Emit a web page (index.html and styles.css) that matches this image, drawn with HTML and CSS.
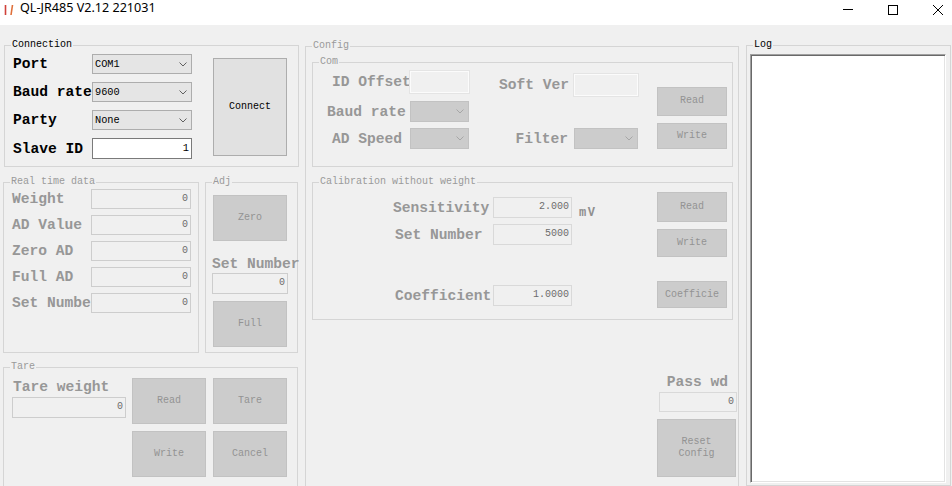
FILE: index.html
```html
<!DOCTYPE html>
<html lang="en">
<head>
    <meta charset="UTF-8">
    <meta name="viewport" content="width=device-width, initial-scale=1.0">
    <title>QL-JR485 V2.12 221031</title>
    <link rel="stylesheet" href="styles.css">
</head>
<body>
    <div class="titlebar">
        <svg class="app-icon" viewBox="0 0 14 14">
            <line x1="3.5" y1="2" x2="3.5" y2="12" stroke="#d0413a" stroke-width="1.6"/>
            <line x1="10.5" y1="2" x2="9" y2="12" stroke="#e0703a" stroke-width="1.6"/>
        </svg>
        <span class="title">QL-JR485 V2.12 221031</span>
        <div class="win-controls">
            <svg viewBox="0 0 10 10"><line x1="0" y1="4.5" x2="10" y2="4.5" stroke="#000"/></svg>
            <svg viewBox="0 0 10 10"><rect x="0.5" y="0.5" width="9" height="9" fill="none" stroke="#000"/></svg>
            <svg viewBox="0 0 10 10"><path d="M0 0 L10 10 M10 0 L0 10" stroke="#000" stroke-width="1"/></svg>
        </div>
    </div>

    <div class="client">
        <div class="col-left">
            <div class="group conn">
                <span class="group-title">Connection</span>
                <div class="conn-grid">
                    <div class="lbl big">Port</div>
                    <div class="combo">COM1<svg viewBox="0 0 8 5"><polyline points="0.5,0.5 4,4 7.5,0.5" fill="none" stroke="#606060"/></svg></div>
                    <div class="lbl big">Baud rate</div>
                    <div class="combo">9600<svg viewBox="0 0 8 5"><polyline points="0.5,0.5 4,4 7.5,0.5" fill="none" stroke="#606060"/></svg></div>
                    <div class="lbl big">Party</div>
                    <div class="combo">None<svg viewBox="0 0 8 5"><polyline points="0.5,0.5 4,4 7.5,0.5" fill="none" stroke="#606060"/></svg></div>
                    <div class="lbl big">Slave ID</div>
                    <div class="tb on">1</div>
                    <button class="btn on connect">Connect</button>
                </div>
            </div>

            <div class="mid-row">
                <div class="group off rt">
                    <span class="group-title">Real time data</span>
                    <div class="rt-grid">
                        <div class="lbl big">Weight</div>
                        <div class="tb">0</div>
                        <div class="lbl big">AD Value</div>
                        <div class="tb">0</div>
                        <div class="lbl big">Zero AD</div>
                        <div class="tb">0</div>
                        <div class="lbl big">Full AD</div>
                        <div class="tb">0</div>
                        <div class="lbl big">Set Numbe</div>
                        <div class="tb">0</div>
                    </div>
                </div>
                <div class="group off adj">
                    <span class="group-title">Adj</span>
                    <div class="adj-body">
                        <button class="btn">Zero</button>
                        <div class="adj-lbl big">Set Number</div>
                        <div class="tb">0</div>
                        <button class="btn full">Full</button>
                    </div>
                </div>
            </div>

            <div class="group off tare">
                <span class="group-title">Tare</span>
                <div class="tare-grid">
                    <div class="tare-field">
                        <div class="tare-lbl big">Tare weight</div>
                        <div class="tb">0</div>
                    </div>
                    <button class="btn">Read</button>
                    <button class="btn right">Tare</button>
                    <div></div>
                    <button class="btn">Write</button>
                    <button class="btn right">Cancel</button>
                </div>
            </div>
        </div>

        <div class="group off config">
            <span class="group-title">Config</span>
            <div class="group com">
                <span class="group-title">Com</span>
                <div class="com-grid">
                    <div class="lbl big a-idl">ID Offset</div>
                    <div class="tb pale a-idt"></div>
                    <div class="lbl big a-svl">Soft Ver</div>
                    <div class="tb pale a-svt"></div>
                    <div class="lbl big a-bdl">Baud rate</div>
                    <div class="combo off a-bdc"><svg viewBox="0 0 8 5"><polyline points="0.5,0.5 4,4 7.5,0.5" fill="none" stroke="#a6a6a6"/></svg></div>
                    <div class="lbl big a-adl">AD Speed</div>
                    <div class="combo off a-adc"><svg viewBox="0 0 8 5"><polyline points="0.5,0.5 4,4 7.5,0.5" fill="none" stroke="#a6a6a6"/></svg></div>
                    <div class="lbl big a-fl">Filter</div>
                    <div class="combo off a-fc"><svg viewBox="0 0 8 5"><polyline points="0.5,0.5 4,4 7.5,0.5" fill="none" stroke="#a6a6a6"/></svg></div>
                    <div class="com-btns">
                        <button class="btn b-read">Read</button>
                        <button class="btn b-write">Write</button>
                    </div>
                </div>
            </div>

            <div class="group cal">
                <span class="group-title">Calibration without weight</span>
                <div class="cal-form">
                    <div class="cal-row">
                        <div class="cal-lbl big">Sensitivity</div>
                        <div class="tb soft">2.000</div>
                        <div class="unit">mV</div>
                    </div>
                    <div class="cal-row">
                        <div class="cal-lbl big ind">Set Number</div>
                        <div class="tb soft">5000</div>
                    </div>
                    <div class="cal-row last">
                        <div class="cal-lbl big ind">Coefficient</div>
                        <div class="tb soft">1.0000</div>
                    </div>
                </div>
                <div class="cal-btns">
                    <button class="btn b-read">Read</button>
                    <button class="btn b-write">Write</button>
                    <button class="btn b-coef">Coefficie</button>
                </div>
            </div>

            <div class="pass">
                <div class="pass-lbl big">Pass wd</div>
                <div class="tb soft">0</div>
                <button class="btn reset">Reset<br>Config</button>
            </div>
        </div>

        <div class="group log">
            <span class="group-title">Log</span>
            <div class="log-box"></div>
        </div>
    </div>
</body>
</html>
```

FILE: styles.css
```css
* {
    box-sizing: border-box;
}
body {
    margin: 0;
    width: 952px;
    height: 486px;
    overflow: hidden;
    background: #f0f0f0;
    font-family: "Liberation Mono", monospace;
    color: #000;
}

/* title bar */
.titlebar {
    height: 25px;
    background: #fff;
    display: flex;
    align-items: flex-start;
}
.app-icon {
    width: 14px;
    height: 14px;
    margin: 3px 0 0 2px;
}
.title {
    margin-left: 4px;
    font-family: "Noto Sans", sans-serif;
    font-size: 12.6px;
    line-height: 16px;
}
.win-controls {
    margin-left: auto;
    display: flex;
    gap: 35px;
    padding: 5px 9px 0 0;
}
.win-controls svg {
    display: block;
    width: 10px;
    height: 10px;
}

/* layout */
.client {
    display: flex;
    align-items: flex-start;
}
.col-left {
    flex: none;
    width: 296px;
    margin-left: 3px;
    display: flex;
    flex-direction: column;
}
.group {
    position: relative;
    flex: none;
    border: 1px solid #d5d5d5;
}
.group-title {
    position: absolute;
    top: -7px;
    left: 6px;
    padding: 0 1px;
    background: #f0f0f0;
    font-size: 10px;
    line-height: 12px;
    white-space: nowrap;
}
.group.off .group-title {
    color: #9a9a9a;
}

/* controls */
.big {
    font-size: 14.6px;
    font-weight: bold;
    white-space: nowrap;
}
.off .big {
    color: #979797;
}
.lbl {
    display: flex;
    align-items: center;
}
.combo {
    display: flex;
    align-items: center;
    height: 20px;
    padding-left: 2px;
    border: 1px solid #adadad;
    background: #e5e5e5;
    font-size: 10.3px;
}
.combo svg {
    width: 8px;
    height: 5px;
    margin-left: auto;
    margin-right: 4px;
}
.combo.off {
    height: 21px;
    background: #cccccc;
    border-color: #c2c2c2;
}
.tb {
    height: 21px;
    padding-right: 2px;
    border: 1px solid #cdcdcd;
    background: #f0f0f0;
    color: #6d6d6d;
    font-size: 10px;
    line-height: 18px;
    text-align: right;
}
.tb.on {
    background: #fff;
    border-color: #7a7a7a;
    color: #000;
    font-size: 10.3px;
}
.tb.pale {
    height: 22px;
    border-color: #fbfbfb;
    box-shadow: 0 0 0 1px #e4e4e4;
}
.tb.soft {
    border-color: #d9d9d9;
}
.btn {
    padding: 0;
    border: 1px solid #c2c2c2;
    background: #cccccc;
    color: #939393;
    font-family: inherit;
    font-size: 10px;
    line-height: 12px;
}
.btn.on {
    background: #e1e1e1;
    border-color: #adadad;
    color: #000;
}

/* connection */
.conn {
    width: 295px;
    height: 122px;
    margin: 20px 0 0 1px;
}
.conn-grid {
    display: grid;
    grid-template-columns: 79px 100px 21px 74px;
    grid-template-rows: 20px 20px 20px 21px;
    row-gap: 8px;
    padding: 8px 0 0 8px;
}
.conn-grid .lbl {
    grid-column: 1;
}
.conn-grid .combo,
.conn-grid .tb {
    grid-column: 2;
}
.connect {
    grid-column: 4;
    grid-row: 1 / 5;
    align-self: start;
    height: 98px;
    margin-top: 4px;
}

/* real time + adj */
.mid-row {
    display: flex;
    margin-top: 15px;
}
.rt {
    width: 196px;
    height: 171px;
}
.rt-grid {
    display: grid;
    grid-template-columns: 79px 100px;
    grid-auto-rows: 20px;
    row-gap: 6px;
    padding: 6px 0 0 8px;
}
.rt-grid .tb {
    height: 20px;
}
.adj {
    width: 93px;
    height: 171px;
    margin-left: 6px;
}
.adj-body {
    height: 100%;
    display: flex;
    flex-direction: column;
    align-items: flex-start;
    padding: 12px 0 0 7px;
}
.adj-body .btn {
    flex: none;
    width: 74px;
    height: 46px;
}
.adj-lbl {
    height: 18px;
    margin: 14px 0 0 -1px;
    line-height: 19px;
}
.adj-body .tb {
    width: 76px;
    margin-left: -1px;
}
.adj-body .full {
    margin-top: 7px;
}

/* tare */
.tare {
    width: 295px;
    height: 125px;
    margin-top: 14px;
}
.tare-grid {
    display: grid;
    grid-template-columns: 114px 74px 75px;
    grid-template-rows: 46px 46px;
    column-gap: 6px;
    row-gap: 7px;
    padding: 10px 0 0 8px;
}
.tare-grid .right {
    justify-self: end;
    width: 74px;
}
.tare-field {
    display: flex;
    flex-direction: column;
}
.tare-lbl {
    height: 19px;
    margin-left: 1px;
    line-height: 19px;
}

/* config */
.config {
    width: 434px;
    height: 445px;
    margin: 21px 0 0 6px;
    padding: 15px 5px 0 6px;
}
.com {
    width: 421px;
    height: 105px;
}
.com-grid {
    display: grid;
    grid-template-columns: 97px 59px 105px 64px 19px 70px;
    grid-template-rows: 30px 27px 21px;
    grid-template-areas:
        "idl idt svl svt . btns"
        "bdl bdc .   .   . btns"
        "adl adc fl  fc  . btns";
    padding-top: 8px;
}
.com-grid .lbl {
    align-self: start;
    height: 21px;
}
.a-idl { grid-area: idl; height: 22px !important; padding-left: 19px; }
.a-idt { grid-area: idt; align-self: start; }
.a-svl { grid-area: svl; height: 22px !important; margin-top: 3px; justify-content: flex-end; padding-right: 5px; }
.a-svt { grid-area: svt; align-self: start; margin-top: 3px; }
.a-bdl { grid-area: bdl; padding-left: 14px; }
.a-bdc { grid-area: bdc; }
.a-adl { grid-area: adl; padding-left: 19px; }
.a-adc { grid-area: adc; }
.a-fl { grid-area: fl; justify-content: flex-end; padding-right: 6px; }
.a-fc { grid-area: fc; }
.com-btns {
    grid-area: btns;
    display: flex;
    flex-direction: column;
    gap: 7px;
    padding-top: 16px;
}
.com-btns .b-read {
    height: 30px;
}
.com-btns .b-write {
    height: 27px;
}

.cal {
    display: flex;
    align-items: flex-start;
    width: 421px;
    height: 138px;
    margin-top: 15px;
}
.cal-form {
    margin: 14px 0 0 80px;
}
.cal-row {
    display: flex;
    align-items: flex-start;
    height: 21px;
}
.cal-row + .cal-row {
    margin-top: 6px;
}
.cal-row.last {
    margin-top: 40px;
}
.cal-lbl {
    width: 100px;
    height: 21px;
    padding-top: 1px;
    line-height: 21px;
}
.cal-lbl.ind {
    padding-left: 2px;
}
.cal-row .tb {
    width: 79px;
}
.unit {
    height: 21px;
    margin-left: 7px;
    padding-top: 6px;
    font-size: 12px;
    font-weight: bold;
    letter-spacing: 1.5px;
    line-height: 21px;
    color: #8f8f8f;
}
.cal-btns {
    width: 70px;
    margin: 9px 5px 0 auto;
    display: flex;
    flex-direction: column;
}
.cal-btns .b-read {
    height: 30px;
}
.cal-btns .b-write {
    height: 28px;
    margin-top: 7px;
}
.cal-btns .b-coef {
    height: 27px;
    margin-top: 24px;
}

.pass {
    display: flex;
    flex-direction: column;
    align-items: flex-end;
    margin-right: -5px;
}
.pass-lbl {
    height: 19px;
    margin: 53px 10px 0 0;
    line-height: 19px;
}
.pass .tb {
    width: 78px;
    height: 20px;
    margin-right: 1px;
}
.reset {
    width: 79px;
    height: 58px;
    margin: 7px 2px 0 0;
}

/* log */
.log {
    width: 205px;
    height: 441px;
    margin: 20px 0 0 7px;
    padding: 8px 0 0 3px;
}
.log-box {
    width: 196px;
    height: 429px;
    background: #fff;
    border: 1px solid;
    border-color: #a0a0a0 #fff #fff #a0a0a0;
    box-shadow: inset 1px 1px 0 #696969, inset -1px -1px 0 #e3e3e3;
}
```
